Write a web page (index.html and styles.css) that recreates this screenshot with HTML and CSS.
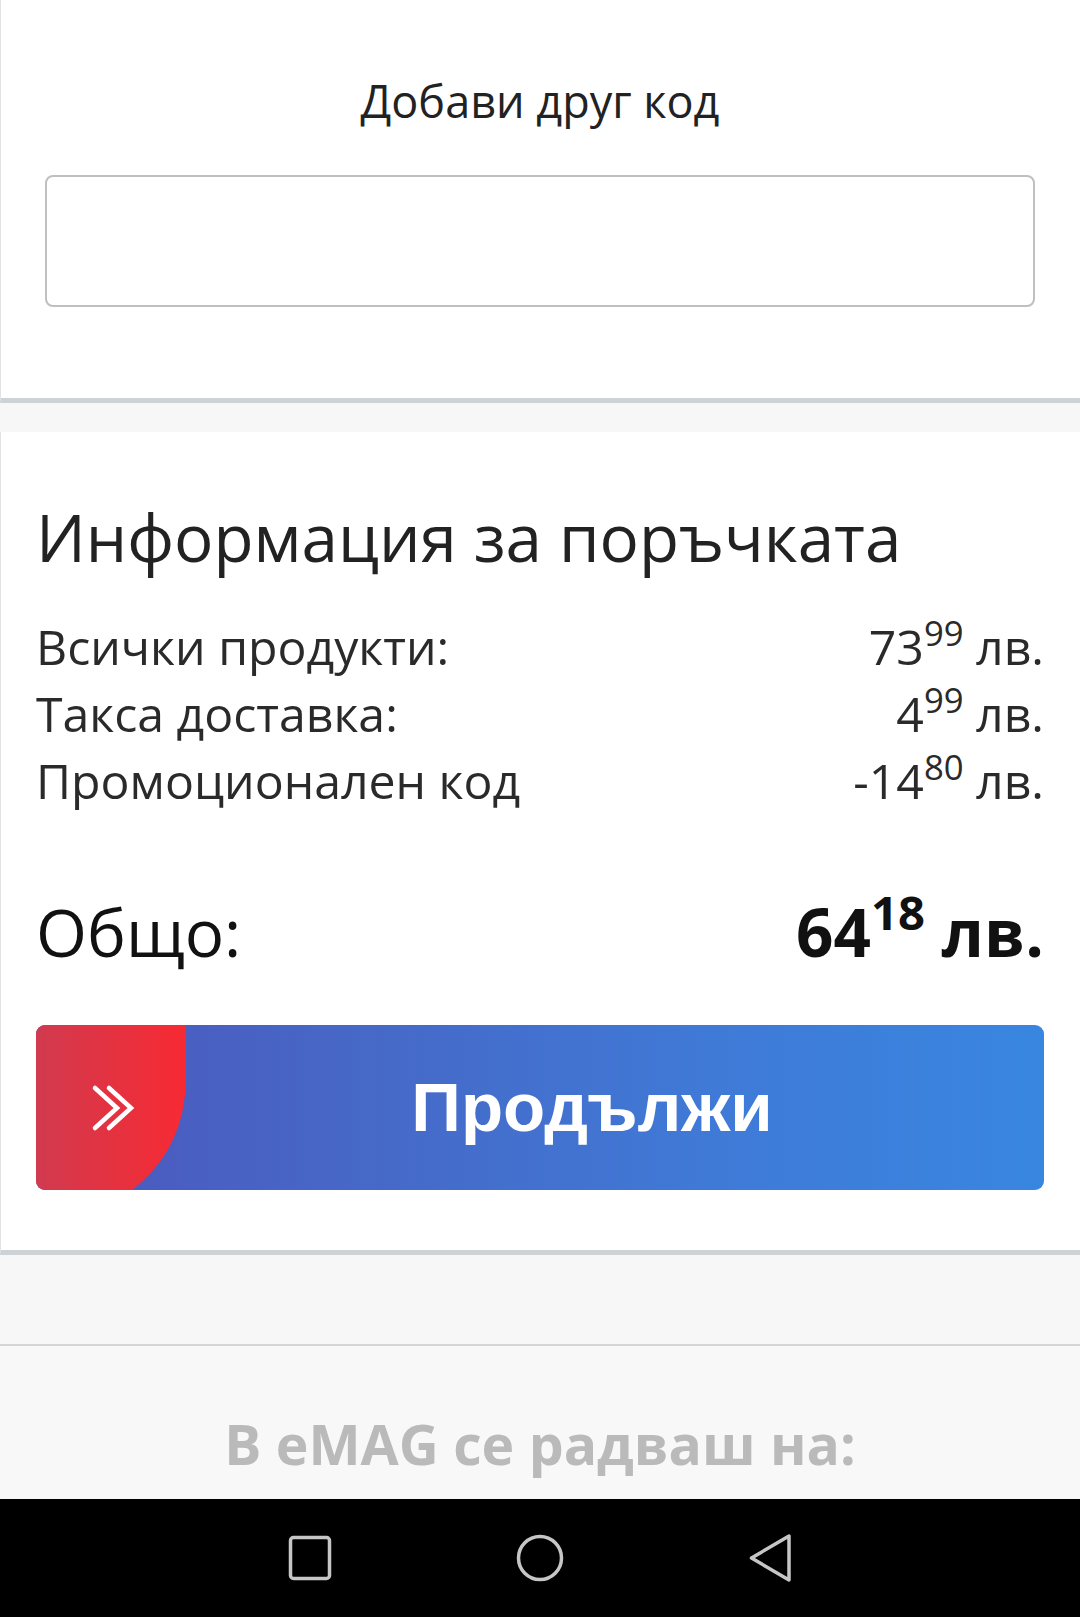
FILE: index.html
```html
<!DOCTYPE html>
<html lang="bg">
<head>
<meta charset="utf-8">
<title>Количка</title>
<link rel="stylesheet" href="styles.css">
</head>
<body>
<div class="screen">
  <main class="page">
    <section class="card card-code">
      <h2 class="code-title">Добави друг код</h2>
      <input class="code-input" type="text" aria-label="Код за отстъпка">
    </section>

    <section class="card card-summary">
      <h1 class="summary-title">Информация за поръчката</h1>
      <div class="rows">
        <div class="row"><span class="label">Всички продукти:</span><span class="price">73<sup>99</sup> лв.</span></div>
        <div class="row"><span class="label">Такса доставка:</span><span class="price">4<sup>99</sup> лв.</span></div>
        <div class="row"><span class="label">Промоционален код</span><span class="price">-14<sup>80</sup> лв.</span></div>
      </div>
      <div class="total">
        <span class="total-label">Общо:</span>
        <span class="total-price">64<sup>18</sup> лв.</span>
      </div>
      <button class="continue" type="button">
        <svg class="continue-accent" width="152" height="165" viewBox="0 0 152 165" aria-hidden="true">
          <defs>
            <linearGradient id="redGrad" x1="0" y1="0" x2="1" y2="0">
              <stop offset="0" stop-color="#d13a4f"/>
              <stop offset="1" stop-color="#f72a33"/>
            </linearGradient>
          </defs>
          <path d="M0 0 H150 V50 C150 105 128 140 96 165 H0 Z" fill="url(#redGrad)"/>
          <path d="M59 63 L81 83 L59 103" fill="none" stroke="#fff" stroke-width="4.5" stroke-linecap="round" stroke-linejoin="miter"/>
          <path d="M73 63 L95 83 L73 103" fill="none" stroke="#fff" stroke-width="4.5" stroke-linecap="round" stroke-linejoin="miter"/>
        </svg>
        <span class="continue-label">Продължи</span>
      </button>
    </section>

    <section class="benefits">
      <h3 class="benefits-title">В eMAG се радваш на:</h3>
    </section>
  </main>

  <nav class="navbar" aria-label="Системна навигация">
    <svg class="nav-icon" width="50" height="50" viewBox="0 0 50 50" aria-hidden="true">
      <rect x="5.5" y="4.5" width="39" height="41" rx="3" fill="none" stroke="#c6c6c6" stroke-width="3.5"/>
    </svg>
    <svg class="nav-icon" width="50" height="50" viewBox="0 0 50 50" aria-hidden="true">
      <circle cx="25" cy="25" r="21.5" fill="none" stroke="#c6c6c6" stroke-width="3.5"/>
    </svg>
    <svg class="nav-icon" width="50" height="50" viewBox="0 0 50 50" aria-hidden="true">
      <path d="M44 3 V47 L6.5 25 Z" fill="none" stroke="#c6c6c6" stroke-width="3.5" stroke-linejoin="round"/>
    </svg>
  </nav>
</div>
</body>
</html>
```

FILE: styles.css
```css
* {
  box-sizing: border-box;
}

html, body {
  margin: 0;
  padding: 0;
}

body {
  width: 1080px;
  height: 1617px;
  overflow: hidden;
  background: #f7f7f7;
  font-family: "Open Sans", "Noto Sans", sans-serif;
  color: #232323;
}

.screen {
  display: flex;
  flex-direction: column;
  height: 1617px;
}

.page {
  flex: 1;
  overflow: hidden;
  display: flex;
  flex-direction: column;
}

.card {
  background: #fff;
  border-left: 1px solid #e3e3e3;
  border-bottom: 5px solid #cdd2d7;
}

/* ---- code card ---- */
.card-code {
  padding: 70px 0 91px 44px;
}

.code-title {
  margin: 0;
  font-weight: 400;
  font-size: 45px;
  line-height: 61px;
  text-align: center;
  color: #222;
  width: 990px;
}

.code-input {
  display: block;
  margin-top: 44px;
  width: 990px;
  height: 132px;
  border: 2px solid #bfbfbf;
  border-radius: 8px;
  background: #fff;
  font: inherit;
  padding: 0 20px;
}

/* ---- summary card ---- */
.card-summary {
  margin-top: 29px;
  padding: 61px 36px 60px 35px;
}

.summary-title {
  margin: 0;
  font-weight: 400;
  font-size: 65.5px;
  line-height: 88px;
  color: #222;
}

.rows {
  margin-top: 32px;
}

.row {
  display: flex;
  justify-content: space-between;
  align-items: baseline;
  height: 67px;
  font-size: 48.2px;
  line-height: 67px;
  color: #2a2a2a;
}

.price sup,
.total-price sup {
  font-size: 0.72em;
  line-height: 0;
  vertical-align: 0.56em;
}

.total {
  margin-top: 74px;
  display: flex;
  justify-content: space-between;
  align-items: baseline;
  height: 88px;
  font-size: 65.5px;
  line-height: 88px;
  color: #111;
}

.total-price {
  font-weight: 700;
}

.total-price sup {
  vertical-align: 0.58em;
}

/* ---- continue button ---- */
.continue {
  position: relative;
  display: flex;
  align-items: center;
  justify-content: center;
  margin-top: 49px;
  width: 1008px;
  height: 165px;
  padding: 0 0 0 104px;
  border: none;
  border-radius: 9px;
  overflow: hidden;
  background: linear-gradient(90deg, #4b57bc 0%, #4767c6 30%, #3f7bd8 70%, #3886e0 100%);
  cursor: pointer;
}

.continue-accent {
  position: absolute;
  left: 0;
  top: 0;
}

.continue-label {
  font-family: "Liberation Sans", Arial, sans-serif;
  font-weight: 700;
  font-size: 69px;
  line-height: 1;
  color: #fff;
}

/* ---- benefits ---- */
.benefits {
  margin-top: 89px;
  border-top: 2px solid #d5d5d5;
  padding-top: 61px;
  background: #f8f8f8;
  flex: 1;
}

.benefits-title {
  margin: 0;
  text-align: center;
  font-weight: 700;
  font-size: 55.3px;
  line-height: 74px;
  color: #bababa;
}

/* ---- system nav bar ---- */
.navbar {
  flex: 0 0 118px;
  height: 118px;
  background: #000;
  display: flex;
  justify-content: center;
  align-items: center;
  gap: 180px;
}

.nav-icon {
  display: block;
}
```
